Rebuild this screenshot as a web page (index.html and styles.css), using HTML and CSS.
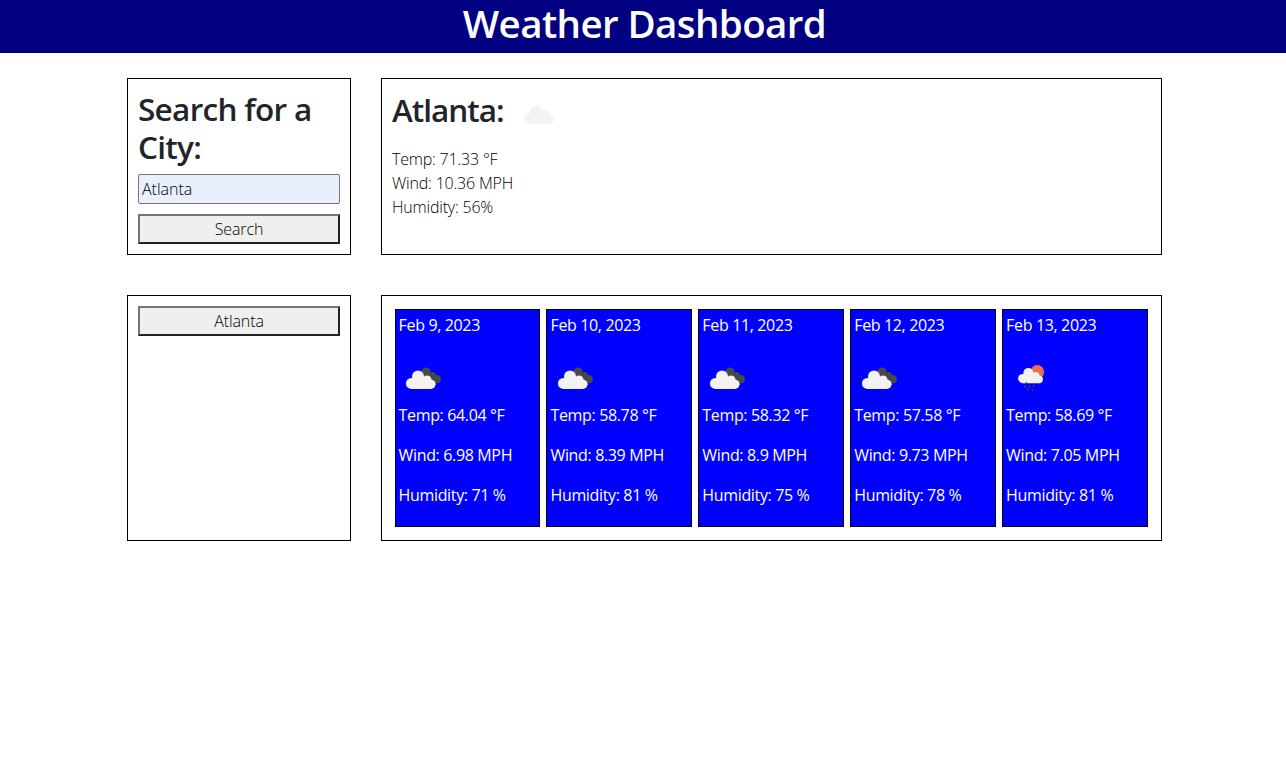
FILE: index.html
```
<!DOCTYPE html>
<html lang="en">
<head>
<meta charset="utf-8">
<title>Weather Dashboard</title>
<link rel="stylesheet" href="styles.css">
</head>
<body>
<svg class="defs" width="0" height="0" aria-hidden="true">
  <symbol id="cloud" viewBox="0 0 50 50">
    <circle cx="13.4" cy="30.4" r="5.5"/><circle cx="20" cy="23.4" r="6"/><circle cx="29" cy="27" r="4.6"/><circle cx="33" cy="31.3" r="4.6"/>
    <path d="M13.4 35.9V27L20 23L29 27L33 31V35.9Z"/>
  </symbol>
  <symbol id="broken" viewBox="0 0 50 50">
    <g fill="#484848"><circle cx="28" cy="19.6" r="5"/><circle cx="34.5" cy="22.6" r="3.6"/><circle cx="38.8" cy="26.2" r="4.1"/><path d="M28 19L35 22L39 30.2L36 30.4L28 28Z"/></g>
    <use href="#cloud" fill="#f2f2f2" width="50" height="50"/>
  </symbol>
  <symbol id="rain" viewBox="0 0 50 50">
    <circle cx="31.3" cy="18.9" r="6.8" fill="#ec6e4c"/>
    <g fill="#f2f2f2"><circle cx="16.7" cy="25.6" r="4.6"/><circle cx="22.3" cy="20" r="5"/><circle cx="29.6" cy="23" r="3.9"/><circle cx="33" cy="26.3" r="3.9"/><path d="M16.7 30.2V22L22 20L29 22L33 26V30.2Z"/></g>
    <path stroke="#484848" stroke-width="1.4" fill="none" d="M20.6 29.3L20 30.8M19.4 32.6L18.6 34.7M23.6 32.4L22.8 34.4M28 32.2L27.4 33.6M22.4 35.6L21.6 37.4M26.7 35.4L25.9 37.4"/>
  </symbol>
</svg>
<header class="banner"><h1 class="banner-title">Weather Dashboard</h1></header>
<main class="dashboard">
  <section class="panel search">
    <h2 class="heading">Search for a City:</h2>
    <input class="city-input" type="text" value="Atlanta">
    <button class="button">Search</button>
  </section>
  <section class="panel today">
    <div class="today-head"><h2 class="heading">Atlanta:</h2><svg class="icon pale"><use href="#cloud"/></svg></div>
    <p class="reading">Temp: 71.33 °F</p>
    <p class="reading">Wind: 10.36 MPH</p>
    <p class="reading">Humidity: 56%</p>
  </section>
  <section class="panel history"><button class="button">Atlanta</button></section>
  <section class="panel forecast">
    <article class="card"><p>Feb 9, 2023</p><svg class="icon"><use href="#broken"/></svg><p>Temp: 64.04 °F</p><p>Wind: 6.98 MPH</p><p>Humidity: 71 %</p></article>
    <article class="card"><p>Feb 10, 2023</p><svg class="icon"><use href="#broken"/></svg><p>Temp: 58.78 °F</p><p>Wind: 8.39 MPH</p><p>Humidity: 81 %</p></article>
    <article class="card"><p>Feb 11, 2023</p><svg class="icon"><use href="#broken"/></svg><p>Temp: 58.32 °F</p><p>Wind: 8.9 MPH</p><p>Humidity: 75 %</p></article>
    <article class="card"><p>Feb 12, 2023</p><svg class="icon"><use href="#broken"/></svg><p>Temp: 57.58 °F</p><p>Wind: 9.73 MPH</p><p>Humidity: 78 %</p></article>
    <article class="card"><p>Feb 13, 2023</p><svg class="icon"><use href="#rain"/></svg><p>Temp: 58.69 °F</p><p>Wind: 7.05 MPH</p><p>Humidity: 81 %</p></article>
  </section>
</main>
</body>
</html>
```
FILE: styles.css
```
* { box-sizing: border-box; }
body {
  margin: 0;
  background: #fff;
  color: #212529;
  font: 400 16px/24px "Segoe UI", "Open Sans", "Noto Sans", sans-serif;
  letter-spacing: -0.35px;
}
h1, h2, p { margin: 0; }
.defs { display: block; }
.banner {
  height: 53px;
  padding-left: 3px;
  background: #000080;
  color: #fff;
  text-align: center;
}
.banner-title {
  font-size: 38.5px;
  font-weight: 550;
  line-height: 46px;
  letter-spacing: -0.6px;
}
.dashboard {
  display: grid;
  grid-template-columns: 224px 781px;
  grid-template-rows: 177px 246px;
  gap: 40px 30px;
  padding: 25px 0 0 127px;
}
.panel {
  border: 1px solid #000;
  padding: 10px;
}
.search { display: flex; flex-direction: column; }
.heading {
  font-size: 31.5px;
  font-weight: 540;
  line-height: 38.4px;
  letter-spacing: -0.7px;
}
.search .heading { padding-top: 1px; margin-bottom: 7px; }
.city-input {
  width: 100%;
  height: 30px;
  margin-bottom: 10px;
  padding: 1px 3px;
  border: 1px solid #767676;
  border-radius: 2px;
  background: #e8f0fe;
  color: #000;
  font: inherit;
  font-weight: 350;
  letter-spacing: 0;
}
.button {
  display: block;
  width: 100%;
  height: 30px;
  padding: 0;
  border: 2px solid;
  border-color: #767676 #212529 #212529 #767676;
  background: #efefef;
  color: #000;
  font: inherit;
  font-weight: 350;
  letter-spacing: -0.1px;
}
.icon { display: block; width: 50px; height: 50px; margin-left: -0.2px; }
.today-head {
  display: flex;
  height: 58px;
}
.today-head .heading { width: 124px; padding-top: 2px; letter-spacing: -1px; }
.pale { fill: #f2f2f2; margin-top: -1px; }
.reading { color: #000; font-weight: 350; letter-spacing: -0.2px; }
.forecast {
  display: grid;
  grid-template-columns: repeat(5, 1fr);
  gap: 6px;
  padding: 13px 13px 13px 12.6px;
}
.card {
  padding: 3px;
  border: 1px solid #000;
  background: #00f;
  color: #fff;
}
.card p { margin-bottom: 16px; }
```
